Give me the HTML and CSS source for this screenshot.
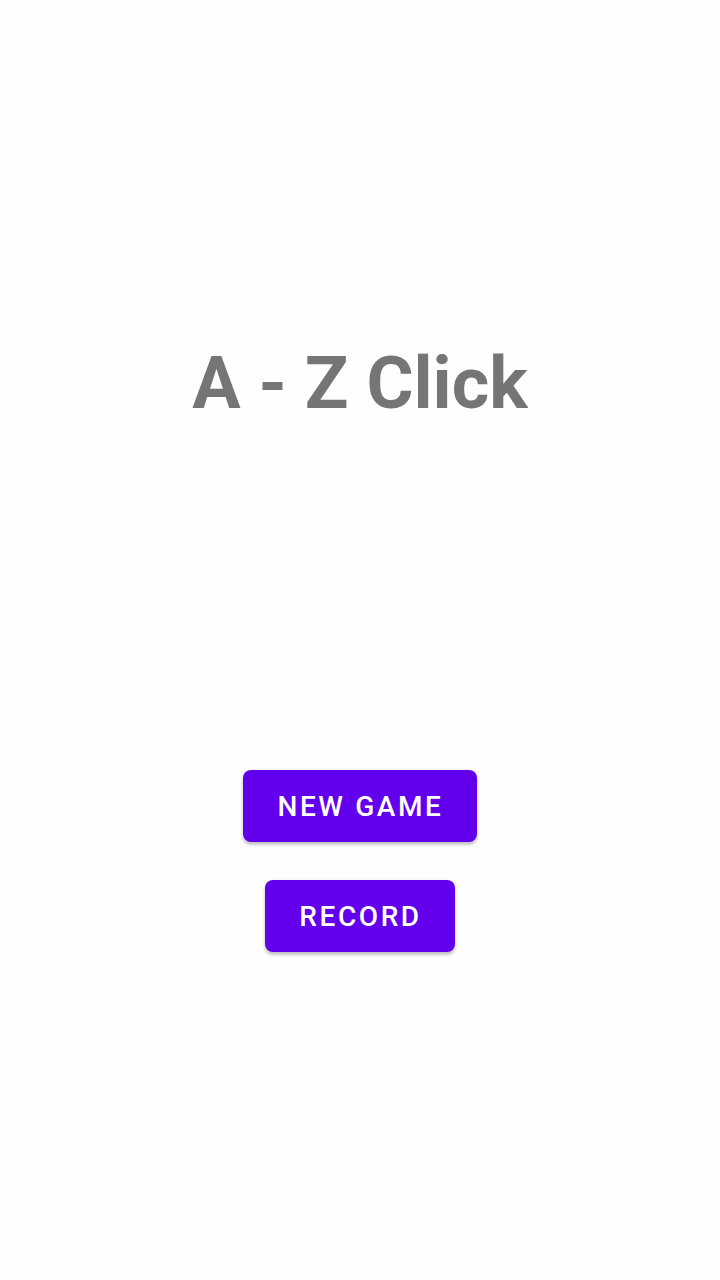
FILE: index.html
```html
<!DOCTYPE html>
<html>
<head>
<meta charset="utf-8">
<link rel="stylesheet" href="styles.css">
</head>
<body>
<main class="screen">
  <h1 class="title">A - Z Click</h1>
  <div class="actions">
    <button class="btn">NEW GAME</button>
    <button class="btn">RECORD</button>
  </div>
</main>
</body>
</html>
```
FILE: styles.css
```css
html, body {
  margin: 0;
  padding: 0;
  background: #fefefe;
}
.screen {
  width: 720px;
  height: 1280px;
  display: flex;
  flex-direction: column;
  align-items: center;
  font-family: Roboto, "Noto Sans", sans-serif;
}
.title {
  margin: 341px 0 0 0;
  font-size: 72px;
  line-height: 86px;
  font-weight: 700;
  color: #767476;
  letter-spacing: 0;
}
.actions {
  margin-top: 343px;
  display: flex;
  flex-direction: column;
  align-items: center;
  gap: 38px;
}
.btn {
  height: 72px;
  padding: 0 33px 0 34px;
  border: none;
  border-radius: 8px;
  background: #6200ee;
  color: #ffffff;
  font-family: Roboto, sans-serif;
  font-weight: 500;
  font-size: 28px;
  letter-spacing: 2.6px;
  box-shadow: 0 3px 3px rgba(0,0,0,0.18), 0 1px 5px rgba(0,0,0,0.10);
}
```
